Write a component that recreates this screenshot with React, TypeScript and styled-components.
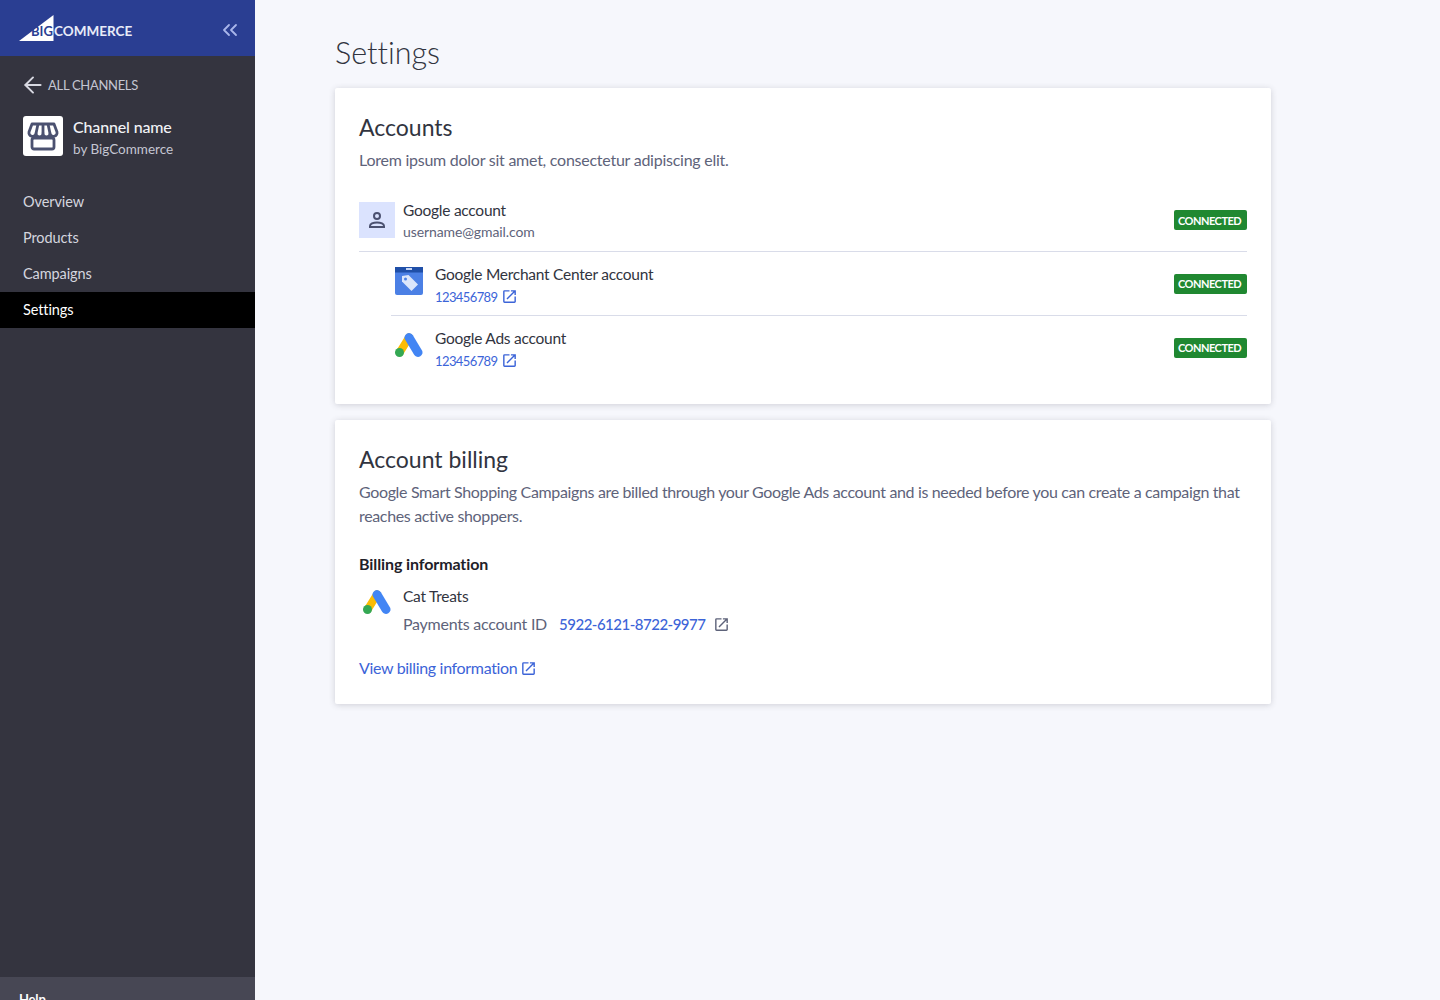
import React from 'react'
import styled, { createGlobalStyle } from 'styled-components'
import { ArrowLeft, ChevronsLeft } from 'lucide-react'

const Global = createGlobalStyle`
  html, body { margin: 0; padding: 0; height: 1000px; overflow: hidden; }
  body {
    font-family: Lato, "Noto Sans", sans-serif;
    font-variant-ligatures: none;
    background: #f6f7fc;
    color: #313440;
  }
`

const Page = styled.div`
  display: flex;
  height: 1000px;
  overflow: hidden;
`

const Sidebar = styled.aside`
  width: 255px;
  flex: none;
  display: flex;
  flex-direction: column;
  background: #34343f;
  color: #fff;
  overflow: hidden;
`

const Brand = styled.div`
  height: 56px;
  box-sizing: border-box;
  padding: 4px 13px 0 19px;
  flex: none;
  background: #2a3e92;
  display: flex;
  align-items: center;
  justify-content: space-between;
  color: #a9b6ea;
`

const Logo = styled.div`
  position: relative;
  height: 26px;
  width: 114px;
  margin-top: -4px;
  svg { display: block; }
`

const LogoBig = styled.span`
  position: absolute;
  left: 12px;
  bottom: 2px;
  font-size: 13px;
  line-height: 16px;
  font-weight: 700;
  color: #2a3e92;
`

const LogoRest = styled.span`
  position: absolute;
  left: 35px;
  bottom: 2px;
  font-size: 13.5px;
  line-height: 16px;
  font-weight: 700;
  color: #e8ebf8;
`

const BackLink = styled.div`
  display: flex;
  align-items: center;
  gap: 2px;
  padding: 18px 0 0 20px;
  height: 22px;
  font-size: 13px;
  letter-spacing: -0.3px;
  color: #c4c6d2;
  svg { color: #d8d9e2; }
`

const Channel = styled.div`
  display: flex;
  align-items: flex-start;
  gap: 10px;
  padding: 20px 0 0 23px;
`

const ChannelIcon = styled.div`
  width: 40px;
  height: 40px;
  border-radius: 3px;
  background: #fff;
  display: flex;
  align-items: center;
  justify-content: center;
`

const ChannelName = styled.div`
  font-size: 16px;
  line-height: 22px;
  font-weight: 500;
  letter-spacing: -0.15px;
  color: #f1f2f6;
`

const ChannelBy = styled.div`
  font-size: 13.5px;
  line-height: 20px;
  color: #c4c6d2;
  margin-top: 1px;
`

const Nav = styled.nav`
  display: flex;
  flex-direction: column;
  margin-top: 25px;
  flex: 1;
`

const NavItem = styled.div<{ $active?: boolean }>`
  height: 36px;
  box-sizing: border-box;
  padding: 0 0 2px 23px;
  display: flex;
  align-items: center;
  font-size: 14.5px;
  letter-spacing: -0.1px;
  color: ${p => (p.$active ? '#fff' : '#d5d6df')};
  background: ${p => (p.$active ? '#000' : 'transparent')};
`

const Help = styled.div`
  height: 60px;
  box-sizing: border-box;
  flex: none;
  margin-bottom: -37px;
  background: #474754;
  padding: 12px 0 0 19px;
  font-size: 13px;
  line-height: 20px;
  font-weight: 700;
  letter-spacing: -0.2px;
`

const Main = styled.main`
  flex: 1;
  padding: 0 169px 0 80px;
`

const Title = styled.h1`
  margin: 0;
  height: 88px;
  display: flex;
  align-items: center;
  padding-top: 16px;
  box-sizing: border-box;
  font-size: 30.5px;
  font-weight: 300;
  color: #313440;
`

const Card = styled.section`
  background: #fff;
  border-radius: 2px;
  box-shadow: 0 1px 6px rgba(49, 52, 64, 0.2);
  padding: 24px;
  margin-bottom: 16px;
`

const CardTitle = styled.h2`
  margin: -1px 0 0;
  font-size: 23px;
  line-height: 32px;
  font-weight: 400;
  color: #313440;
`

const Lead = styled.p`
  margin: 5px 0 0;
  font-size: 16px;
  line-height: 24px;
  letter-spacing: -0.25px;
  color: #5e637a;
`

const LongLead = styled(Lead)`
  letter-spacing: -0.35px;
`

const AccountList = styled.div`
  margin-top: 15px;
  padding-bottom: 1px;
`

const Row = styled.div<{ $nested?: boolean }>`
  display: flex;
  align-items: center;
  height: 64px;
  margin-left: ${p => (p.$nested ? '32px' : '0')};
  border-top: ${p => (p.$nested ? '1px solid #d9dce9' : 'none')};
  padding-top: ${p => (p.$nested ? '0' : '2px')};
  box-sizing: border-box;
`

const FirstNested = styled(Row)`
  margin-left: 0;
  padding-left: 36px;
`

const IconSlot = styled.div<{ $width: number; $inset?: number }>`
  width: ${p => p.$width}px;
  padding-left: ${p => p.$inset ?? 0}px;
  box-sizing: border-box;
  flex: none;
  display: flex;
  align-items: flex-start;
`

const PersonBox = styled.div`
  width: 36px;
  height: 36px;
  background: #dbe3fe;
  display: flex;
  align-items: center;
  justify-content: center;
`

const LogoWrap = styled.div<{ $billing?: boolean }>`
  margin: ${p => (p.$billing ? '5px 0 0' : '0 0 6px')};
  svg { display: block; }
`

const RowText = styled.div`
  flex: 1;
  padding-top: 2px;
`

const RowName = styled.div`
  font-size: 15.5px;
  line-height: 22px;
  letter-spacing: -0.25px;
  color: #313440;
`

const RowSub = styled.div`
  margin: 1px 0;
  font-size: 14px;
  line-height: 20px;
  letter-spacing: -0.1px;
  color: #5e637a;
`

const RowLink = styled.a`
  display: flex;
  align-items: center;
  gap: 4px;
  margin-top: 2px;
  font-size: 13px;
  line-height: 20px;
  letter-spacing: -0.6px;
  color: #3c64d8;
`

const Badge = styled.span`
  background: #208831;
  color: #fff;
  border-radius: 2px;
  padding: 0 4px;
  width: 65px;
  height: 20px;
  display: flex;
  align-items: center;
  font-size: 11px;
  font-weight: 700;
  letter-spacing: -0.5px;
  white-space: nowrap;
`

const BillingTitle = styled.h3`
  margin: 24px 0 0;
  font-size: 16px;
  line-height: 24px;
  font-weight: 700;
  letter-spacing: -0.1px;
  color: #1f2129;
`

const BillingRow = styled.div`
  display: flex;
  margin-top: 8px;
`

const BillingName = styled.div`
  font-size: 15.5px;
  line-height: 24px;
  letter-spacing: -0.25px;
  color: #313440;
`

const PaymentRow = styled.div`
  display: flex;
  align-items: center;
  margin-top: 4px;
  font-size: 16px;
  line-height: 24px;
  letter-spacing: -0.25px;
  color: #5e637a;
`

const PaymentId = styled.a`
  margin: 0 8px 0 12px;
  font-size: 15px;
  font-weight: 500;
  letter-spacing: -0.5px;
  color: #3c64d8;
`

const ViewLink = styled.a`
  display: inline-flex;
  align-items: center;
  gap: 3px;
  margin-top: 20px;
  font-size: 16px;
  line-height: 24px;
  letter-spacing: -0.33px;
  color: #3c64d8;
`

const Person = () => (
  <svg width="20" height="20" viewBox="0 0 20 20" fill="none" stroke="#4b5170" strokeWidth="2">
    <circle cx="10" cy="6" r="3" />
    <path d="M3 17v-1c0-2 3-3.5 7-3.5s7 1.5 7 3.5v1z" />
  </svg>
)

const Merchant = () => (
  <svg width="28" height="28" viewBox="0 0 28 28">
    <rect width="28" height="28" rx="2" fill="#4b80e5" />
    <rect width="28" height="5.5" fill="#1f4fa8" />
    <rect x="11" y="1" width="6" height="2" fill="#c5d5f5" />
    <path d="M7 9l6.500-1 9.500 9.500-6.500 6.500L7 14.500z" fill="#dbe6fb" />
    <circle cx="10.500" cy="12" r="1.500" fill="#4b80e5" />
  </svg>
)

const AdsLogo = () => (
  <svg width="28" height="26" viewBox="0 0 28 26">
    <path d="M14 5.500L5 20" stroke="#fbbc04" strokeWidth="8" strokeLinecap="round" />
    <circle cx="4.500" cy="20.500" r="4.500" fill="#34a853" />
    <path d="M14 5.500l9 15" stroke="#4285f4" strokeWidth="9" strokeLinecap="round" />
  </svg>
)

const Store = () => (
  <svg width="32" height="30" viewBox="0 0 32 30" fill="none" stroke="#4b5170" strokeWidth="2.800" strokeLinejoin="round">
    <path d="M5 3h22l3 8a3.500 3.500 0 0 1-7 1.500 3.500 3.500 0 0 1-7 0 3.500 3.500 0 0 1-7 0A3.500 3.500 0 0 1 2 11z" />
    <path d="M11 3l-2 9.500M21 3l2 9.500M16 3v9.500" />
    <rect x="5" y="17" width="22" height="11" rx="2" />
  </svg>
)

const Triangle = () => (
  <svg width="35" height="26" viewBox="0 0 35 26">
    <path d="M0 26L34.500 0v26z" fill="#fff" />
  </svg>
)

// material "open in new", lucide's one has a different arrow
const Out = ({ size = 17 }: { size?: number }) => (
  <svg width={size} height={size} viewBox="0 0 24 24" fill="currentColor">
    <path d="M19 19H5V5h7V3H5a2 2 0 0 0-2 2v14a2 2 0 0 0 2 2h14c1.100 0 2-.9 2-2v-7h-2v7zM14 3v2h3.590l-9.830 9.830 1.410 1.410L19 6.410V10h2V3h-7z" />
  </svg>
)

export default function App() {
  return (
    <Page>
      <Global />
      <Sidebar>
        <Brand>
          <Logo>
            <Triangle />
            <LogoBig>BIG</LogoBig>
            <LogoRest>COMMERCE</LogoRest>
          </Logo>
          <ChevronsLeft size={24} strokeWidth={1.8} />
        </Brand>
        <BackLink>
          <ArrowLeft size={26} strokeWidth={1.8} />
          ALL CHANNELS
        </BackLink>
        <Channel>
          <ChannelIcon>
            <Store />
          </ChannelIcon>
          <div>
            <ChannelName>Channel name</ChannelName>
            <ChannelBy>by BigCommerce</ChannelBy>
          </div>
        </Channel>
        <Nav>
          <NavItem>Overview</NavItem>
          <NavItem>Products</NavItem>
          <NavItem>Campaigns</NavItem>
          <NavItem $active>Settings</NavItem>
        </Nav>
        <Help>Help</Help>
      </Sidebar>
      <Main>
        <Title>Settings</Title>
        <Card>
          <CardTitle>Accounts</CardTitle>
          <Lead>Lorem ipsum dolor sit amet, consectetur adipiscing elit.</Lead>
          <AccountList>
            <Row>
              <IconSlot $width={44}>
                <PersonBox>
                  <Person />
                </PersonBox>
              </IconSlot>
              <RowText>
                <RowName>Google account</RowName>
                <RowSub>username@gmail.com</RowSub>
              </RowText>
              <Badge>CONNECTED</Badge>
            </Row>
            <FirstNested $nested>
              <IconSlot $width={40}>
                <LogoWrap>
                  <Merchant />
                </LogoWrap>
              </IconSlot>
              <RowText>
                <RowName>Google Merchant Center account</RowName>
                <RowLink>
                  123456789 <Out />
                </RowLink>
              </RowText>
              <Badge>CONNECTED</Badge>
            </FirstNested>
            <Row $nested>
              <IconSlot $width={44} $inset={4}>
                <LogoWrap>
                  <AdsLogo />
                </LogoWrap>
              </IconSlot>
              <RowText>
                <RowName>Google Ads account</RowName>
                <RowLink>
                  123456789 <Out />
                </RowLink>
              </RowText>
              <Badge>CONNECTED</Badge>
            </Row>
          </AccountList>
        </Card>
        <Card>
          <CardTitle>Account billing</CardTitle>
          <LongLead>
            Google Smart Shopping Campaigns are billed through your Google Ads account and is needed before you can
            create a campaign that reaches active shoppers.
          </LongLead>
          <BillingTitle>Billing information</BillingTitle>
          <BillingRow>
            <IconSlot $width={44} $inset={4}>
              <LogoWrap $billing>
                <AdsLogo />
              </LogoWrap>
            </IconSlot>
            <div>
              <BillingName>Cat Treats</BillingName>
              <PaymentRow>
                Payments account ID
                <PaymentId>5922-6121-8722-9977</PaymentId>
                <Out />
              </PaymentRow>
            </div>
          </BillingRow>
          <ViewLink>
            View billing information <Out />
          </ViewLink>
        </Card>
      </Main>
    </Page>
  )
}
